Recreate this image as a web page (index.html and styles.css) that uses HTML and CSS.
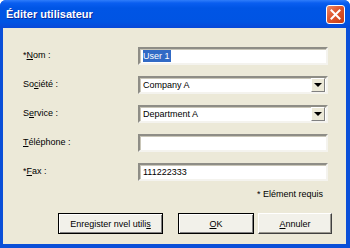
FILE: index.html
```html
<!DOCTYPE html>
<html lang="fr">
<head>
    <meta charset="UTF-8">
    <title>Éditer utilisateur</title>
    <link rel="stylesheet" href="styles.css">
</head>
<body>

    <div class="window">
        <div class="titlebar">
            <span class="title">Éditer utilisateur</span>
            <span class="close">
                <svg width="11" height="11" viewBox="0 0 11 11">
                    <path d="M1.5 1.5 L9.5 9.5 M9.5 1.5 L1.5 9.5" stroke="#fff" stroke-width="2" stroke-linecap="square"/>
                </svg>
            </span>
        </div>

        <div class="client">
            <div class="form">
                <label>*<u>N</u>om :</label>
                <div class="field"><span class="selected">User 1</span></div>

                <label>So<u>c</u>iété :</label>
                <div class="field combo"><span class="value">Company A</span><span class="drop"><i></i></span></div>

                <label>S<u>e</u>rvice :</label>
                <div class="field combo"><span class="value">Department A</span><span class="drop"><i></i></span></div>

                <label><u>T</u>éléphone :</label>
                <div class="field"></div>

                <label>*<u>F</u>ax :</label>
                <div class="field">111222333</div>
            </div>

            <div class="note">* Elément requis</div>

            <div class="actions">
                <button class="btn default wide">Enregister nvel utili<u>s</u></button>
                <button class="btn default"><u>O</u>K</button>
                <button class="btn"><u>A</u>nnuler</button>
            </div>
        </div>
    </div>

</body>
</html>
```

FILE: styles.css
```css
body {
    margin: 0;
    font-family: "Liberation Sans", Arial, sans-serif;
    font-size: 9px;
    color: #000;
}
.window {
    width: 350px;
    height: 248px;
    display: flex;
    flex-direction: column;
    background: #0a4fd8;
    border-radius: 6px 6px 0 0;
    overflow: hidden;
}
.titlebar {
    height: 28px;
    display: flex;
    align-items: center;
    justify-content: space-between;
    padding: 0 5px 0 6px;
    background: linear-gradient(#2f7dfa 0, #0a5ef0 3px, #0055e5 8px, #0054e3 22px, #0848d8 28px);
}
.title {
    color: #fff;
    font-weight: bold;
    font-size: 11px;
    text-shadow: 1px 1px 0 #0a2a9c;
}
.close {
    width: 17px;
    height: 17px;
    display: flex;
    align-items: center;
    justify-content: center;
    border: 1px solid #fff;
    border-radius: 3px;
    background: linear-gradient(135deg, #ec8a68 0, #e05a32 40%, #c63c14 100%);
}
.client {
    flex: 1;
    margin: 0 4px 4px 3px;
    background: #ece9d8;
    padding: 19px 0 0 20px;
}
.form {
    display: grid;
    grid-template-columns: 115px 190px;
    grid-auto-rows: 18px;
    row-gap: 11px;
}
.form label {
    display: flex;
    align-items: center;
    padding-bottom: 3px;
}
.field {
    display: flex;
    align-items: center;
    border: 2px solid;
    border-color: #8e8d86 #f4f3ee #f4f3ee #8e8d86;
    box-shadow: inset 1px 1px 0 #c9c6b8;
    background: #fff;
    padding-left: 3px;
}
.selected {
    background: #316ac5;
    color: #fff;
    padding: 1px 1px 1px 0;
}
.combo {
    padding-right: 1px;
}
.combo .value {
    flex: 1;
}
.drop {
    width: 12px;
    height: 12px;
    display: flex;
    align-items: center;
    justify-content: center;
    background: #ece9d8;
    border: 1px solid;
    border-color: #fff #808080 #808080 #fff;
}
.drop i {
    border-left: 4px solid transparent;
    border-right: 4px solid transparent;
    border-top: 4px solid #000;
}
.note {
    margin-top: 8px;
    padding-right: 23px;
    text-align: right;
    line-height: 11px;
}
.actions {
    display: flex;
    justify-content: flex-end;
    gap: 4px;
    margin-top: 13px;
    padding-right: 14px;
}
.btn {
    width: 74px;
    height: 21px;
    font-family: inherit;
    font-size: 9px;
    color: #000;
    background: #f2f1ea;
    border: 1px solid;
    border-color: #fff #404040 #404040 #fff;
    box-shadow: inset -1px -1px 0 #9a988f;
    padding: 0;
}
.btn.default {
    width: 76px;
    border-color: #000;
    box-shadow: inset 1px 1px 0 #fff, inset -1px -1px 0 #808080;
}
.btn.wide {
    width: 105px;
    margin-right: 11px;
}
```
